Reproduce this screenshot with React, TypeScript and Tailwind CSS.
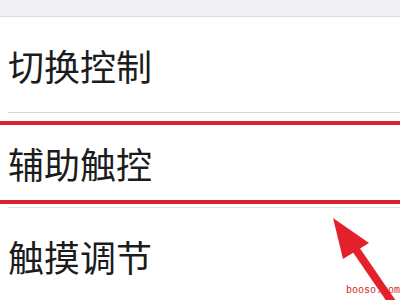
const rowText =
  "pl-[8px] text-[36px] leading-none text-[#1c1c1c] font-['Noto_Sans_CJK_SC','Noto_Sans',sans-serif]";

export default function App() {
  return (
    <div className="relative h-[300px] w-[400px] overflow-hidden bg-white">
      <div className="h-[17px] border-b border-[#dcdce0] bg-[#efeff4]" />

      <div className="flex h-[95px] items-center">
        <span className={rowText}>切换控制</span>
      </div>
      <div className="ml-[8px] h-px bg-[#cfd8d4]" />

      <div className="h-[8px]" />
      <div className="h-[4px] bg-[#d8232f]" />
      <div className="flex h-[75px] items-center">
        <span className={rowText}>辅助触控</span>
      </div>
      <div className="h-[4px] bg-[#d8232f]" />
      <div className="h-[3px]" />
      <div className="ml-[8px] h-px bg-[#e2e2e4]" />

      <div className="flex h-[95px] items-center">
        <span className={rowText}>触摸调节</span>
      </div>

      {/* watermark sits under the arrow */}
      <span className="absolute left-[346px] top-[286px] text-[10px] leading-none text-[#d81e2a] font-['Liberation_Mono',monospace]">
        booso.com
      </span>

      <svg
        className="pointer-events-none absolute inset-0"
        width="400"
        height="300"
        viewBox="0 0 400 300"
      >
        <line x1="348" y1="238" x2="396" y2="308" stroke="#e3202b" strokeWidth="8" />
        <polygon points="333,218 369,243 343,259" fill="#e3202b" />
      </svg>
    </div>
  );
}
